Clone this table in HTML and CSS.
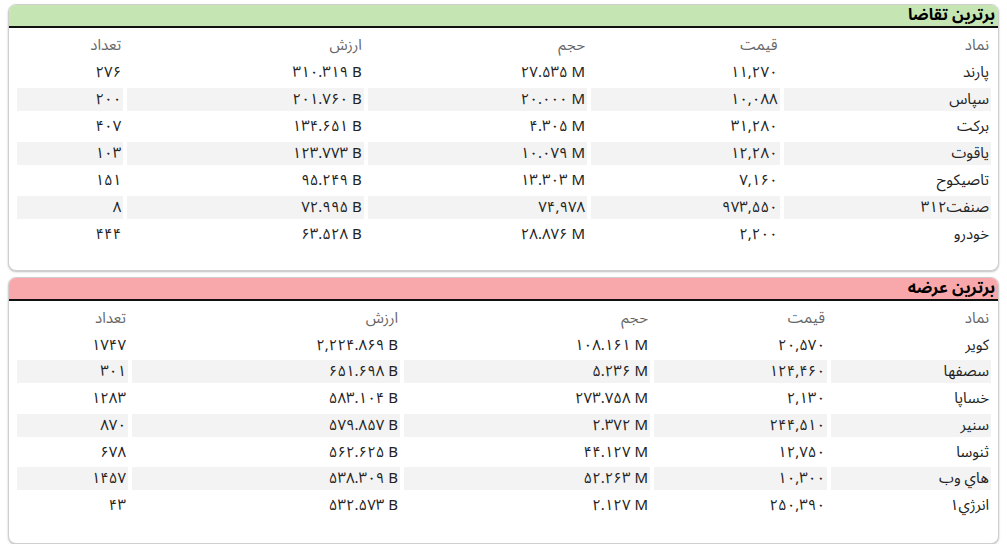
FILE: index.html
```html
<!DOCTYPE html>
<html lang="fa" dir="rtl">
<head>
<meta charset="utf-8">
<link rel="stylesheet" href="styles.css">
</head>
<body>
<div class="page">
  <section class="panel">
    <div class="head head-green">برترین تقاضا</div>
    <div class="body">
      <table class="grid grid-top">
        <colgroup><col class="c1"><col class="c2"><col class="c3"><col class="c4"><col class="c5"></colgroup>
        <thead><tr><th>نماد</th><th>قیمت</th><th>حجم</th><th>ارزش</th><th>تعداد</th></tr></thead>
        <tbody>
          <tr><td>پارند</td><td class="n">۱۱,۲۷۰</td><td class="n">۲۷.۵۳۵ M</td><td class="n">۳۱۰.۳۱۹ B</td><td class="n">۲۷۶</td></tr>
          <tr><td>سپاس</td><td class="n">۱۰,۰۸۸</td><td class="n">۲۰.۰۰۰ M</td><td class="n">۲۰۱.۷۶۰ B</td><td class="n">۲۰۰</td></tr>
          <tr><td>برکت</td><td class="n">۳۱,۲۸۰</td><td class="n">۴.۳۰۵ M</td><td class="n">۱۳۴.۶۵۱ B</td><td class="n">۴۰۷</td></tr>
          <tr><td>یاقوت</td><td class="n">۱۲,۲۸۰</td><td class="n">۱۰.۰۷۹ M</td><td class="n">۱۲۳.۷۷۳ B</td><td class="n">۱۰۳</td></tr>
          <tr><td>تاصیکوح</td><td class="n">۷,۱۶۰</td><td class="n">۱۳.۳۰۳ M</td><td class="n">۹۵.۲۴۹ B</td><td class="n">۱۵۱</td></tr>
          <tr><td>صنفت۳۱۲</td><td class="n">۹۷۳,۵۵۰</td><td class="n">۷۴,۹۷۸</td><td class="n">۷۲.۹۹۵ B</td><td class="n">۸</td></tr>
          <tr><td>خودرو</td><td class="n">۲,۲۰۰</td><td class="n">۲۸.۸۷۶ M</td><td class="n">۶۳.۵۲۸ B</td><td class="n">۴۴۴</td></tr>
        </tbody>
      </table>
    </div>
  </section>
  <section class="panel">
    <div class="head head-red">برترین عرضه</div>
    <div class="body">
      <table class="grid grid-bottom">
        <colgroup><col class="c1"><col class="c2"><col class="c3"><col class="c4"><col class="c5"></colgroup>
        <thead><tr><th>نماد</th><th>قیمت</th><th>حجم</th><th>ارزش</th><th>تعداد</th></tr></thead>
        <tbody>
          <tr><td>کویر</td><td class="n">۲۰,۵۷۰</td><td class="n">۱۰۸.۱۶۱ M</td><td class="n">۲,۲۲۴.۸۶۹ B</td><td class="n">۱۷۴۷</td></tr>
          <tr><td>سصفها</td><td class="n">۱۲۴,۴۶۰</td><td class="n">۵.۲۳۶ M</td><td class="n">۶۵۱.۶۹۸ B</td><td class="n">۳۰۱</td></tr>
          <tr><td>خساپا</td><td class="n">۲,۱۳۰</td><td class="n">۲۷۳.۷۵۸ M</td><td class="n">۵۸۳.۱۰۴ B</td><td class="n">۱۲۸۳</td></tr>
          <tr><td>سنیر</td><td class="n">۲۴۴,۵۱۰</td><td class="n">۲.۳۷۲ M</td><td class="n">۵۷۹.۸۵۷ B</td><td class="n">۸۷۰</td></tr>
          <tr><td>ثنوسا</td><td class="n">۱۲,۷۵۰</td><td class="n">۴۴.۱۲۷ M</td><td class="n">۵۶۲.۶۲۵ B</td><td class="n">۶۷۸</td></tr>
          <tr><td>هاي وب</td><td class="n">۱۰,۳۰۰</td><td class="n">۵۲.۲۶۳ M</td><td class="n">۵۳۸.۳۰۹ B</td><td class="n">۱۴۵۷</td></tr>
          <tr><td>انرژي۱</td><td class="n">۲۵۰,۳۹۰</td><td class="n">۲.۱۲۷ M</td><td class="n">۵۳۲.۵۷۳ B</td><td class="n">۴۳</td></tr>
        </tbody>
      </table>
    </div>
  </section>
</div>
</body>
</html>
```
FILE: styles.css
```css
html, body {
  margin: 0;
  padding: 0;
  background: #ffffff;
}
body {
  font-family: "Noto Sans Arabic", "Noto Sans", "DejaVu Sans", sans-serif;
  color: #222;
}
.page {
  display: flex;
  flex-direction: column;
  gap: 6px;
  padding: 4px 8px 0 8px;
  width: 991px;
}
.panel {
  height: 267px;
  box-sizing: border-box;
  background: #fff;
  border: 1px solid #cfcfcf;
  border-radius: 8px;
  box-shadow: 0 1px 2px rgba(0,0,0,0.25);
}
.head {
  height: 21px;
  line-height: 21px;
  border-bottom: 2px solid #111;
  border-radius: 7px 7px 0 0;
  padding: 0 3px 0 0;
  font-size: 16px;
  font-weight: bold;
  color: #000;
}
.head-green { background: #c5e6b2; }
.head-red { background: #f8a8aa; }
.body {
  padding: 2px 3px 0 4px;
}
.grid {
  width: 100%;
  table-layout: fixed;
  border-collapse: separate;
  border-spacing: 4px;
  font-size: 15px;
}
.grid th, .grid td {
  height: 23px;
  padding: 0 2px 0 2px;
  text-align: right;
  white-space: nowrap;
  line-height: 23px;
}
.grid-bottom th, .grid-bottom td {
  height: 22.7px;
  line-height: 22.7px;
}
.grid th {
  font-weight: normal;
  color: #666;
}
.grid td { color: #222; }
.grid td.n { direction: ltr; text-align: right; }
.grid tbody tr:nth-child(even) td { background: #f3f3f3; }
.grid-top .c1 { width: 207px; }
.grid-top .c2 { width: 188px; }
.grid-top .c3 { width: 219px; }
.grid-top .c4 { width: 236px; }
.grid-top .c5 { width: 106px; }
.grid-bottom .c1 { width: 160px; }
.grid-bottom .c2 { width: 173px; }
.grid-bottom .c3 { width: 246px; }
.grid-bottom .c4 { width: 268px; }
.grid-bottom .c5 { width: 111px; }
```
